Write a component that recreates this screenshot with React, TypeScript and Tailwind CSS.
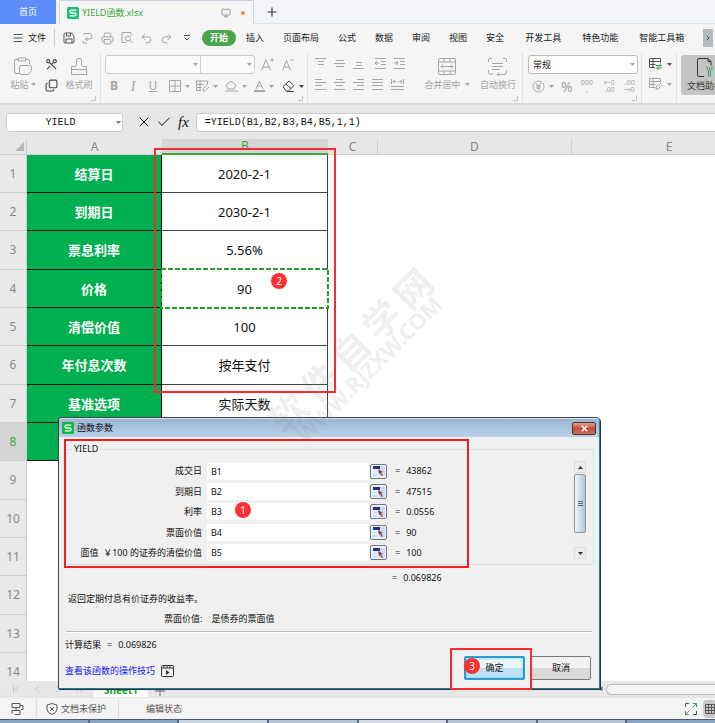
import type { ReactNode } from "react";
import { ChevronLeft, ChevronRight, ChevronFirst, ChevronLast, Menu, Monitor, Plus, Printer, Redo2, Scissors, Undo2, Copy, Check, X } from "lucide-react";

type IconProps = { w: number; h: number; children: ReactNode; className?: string };

function Icon({ w, h, children, className = "" }: IconProps) {
  return (
    <svg width={w} height={h} viewBox={`0 0 ${w} ${h}`} fill="none" stroke="currentColor" strokeWidth="1" className={`shrink-0 ${className}`} aria-hidden="true">
      {children}
    </svg>
  );
}

function Caret({ className = "" }: { className?: string }) {
  return (
    <svg width="5" height="3" viewBox="0 0 5 3" className={`shrink-0 ${className}`} aria-hidden="true">
      <path d="M0 0h5L2.5 3z" fill="currentColor" />
    </svg>
  );
}

function Corner() {
  return (
    <Icon w={5} h={5} className="absolute right-1 bottom-[2px] text-[#c4c4c4]">
      <path d="M0 4.5h4.5V0" />
    </Icon>
  );
}

function Logo({ className }: { className: string }) {
  return (
    <svg viewBox="0 0 12 12" className={className} aria-hidden="true">
      <rect width="12" height="12" rx="1.5" fill="currentColor" />
      <path d="M9.3 3.2H4.4Q2.9 3.2 2.9 4.5T4.4 6h3.2Q9.1 6 9.1 7.4T7.6 8.8H2.7" fill="none" stroke="#fff" strokeWidth="1.3" />
    </svg>
  );
}

const lines: Record<string, string> = {
  top: "M0 .5h11M3 3.5h6M3 6.5h6",
  middle: "M2 2.5h8M0 5.5h11M2 8.5h8",
  bottom: "M3 4.5h6M3 7.5h6M0 10.5h11",
  left: "M0 .5h7M0 3.5h11M0 6.5h7M0 10.5h11",
  center: "M2 .5h7M0 3.5h11M2 6.5h7M0 10.5h11",
  right: "M4 .5h7M0 3.5h11M4 6.5h7M0 10.5h11",
  justify: "M0 .5h11M0 3.5h11M0 6.5h11M0 10.5h11",
  outdent: "M0 .5h11M6 3.5h5M6 6.5h5M0 10.5h11M0 5h4M2 3 0 5l2 2",
  indent: "M0 .5h11M6 3.5h5M6 6.5h5M0 10.5h11M0 5h4M2 3l2 2-2 2",
  spread: "M.5 0v5M12.5 0v5M2 2.5h3.500M3.500 1 2 2.500 3.500 4M7.500 2.500H11M9.500 1 11 2.500 9.500 4M0 7.5h13M0 10.5h13",
};

function Lines({ kind, label }: { kind: string; label: string }) {
  return (
    <button aria-label={label} className="flex w-[19px] justify-center">
      <Icon w={13} h={11}><path d={lines[kind]} /></Icon>
    </button>
  );
}

const menus = ["插入", "页面布局", "公式", "数据", "审阅", "视图", "安全"];

function Tabs() {
  return (
    <div className="flex h-6 shrink-0 bg-[#f2f4f9] text-[9px]">
      <button className="w-14 bg-[#5c8dfa] text-white">首页</button>
      <div className="ml-[3px] flex w-[195px] items-center rounded-t-[2px] border-x border-t border-[#ccd3e0] bg-[#f5f5f5] pr-2 pl-[7px]">
        <Logo className="size-3 text-[#1fbf7a]" />
        <span className="ml-[3px] text-[#3aa53a]">YIELD函数.xlsx</span>
        <Monitor className="ml-auto size-[10px] text-[#909090]" />
        <span className="ml-[10px] size-1 rounded-full bg-[#ee9343]" />
      </div>
      <button aria-label="新建" className="flex w-9 items-center justify-center border-b border-[#dfe4ec]">
        <Plus className="size-[14px] text-[#333]" />
      </button>
      <div className="grow border-b border-[#dfe4ec]" />
    </div>
  );
}

function MenuBar() {
  return (
    <nav className="flex h-[28px] shrink-0 items-center bg-[#f5f5f5] text-[9px] whitespace-nowrap text-[#222]">
      <button className="ml-[12px] flex items-center gap-1"><Menu className="size-3 text-[#555]" />文件</button>
      <span className="ml-2 h-[18px] w-px bg-[#ccc]" />
      <div className="ml-2 flex items-center gap-[7px] text-[#a5a5a5]">
        <button aria-label="保存" className="text-[#555]"><Icon w={12} h={12}><path d="M1 2.500V10q0 1 1 1h8q1 0 1-1V4L8.500 1H2Q1 1 1 2.500ZM3.500 1v3h4V1M3 11V7h6v4" /></Icon></button>
        <button aria-label="输出"><Icon w={12} h={12}><path d="M2 3V1.500h5.500q2.500.5 2.500 3T7.500 7H3.500M5.500 5l-2 2 2 2M1 9v2h4" /></Icon></button>
        <button aria-label="打印"><Printer className="size-[13px] stroke-[1.800px]" /></button>
        <button aria-label="打印预览"><Icon w={12} h={12}><path d="M5 10.500H1V.5h9v3" /><circle cx="7" cy="6.500" r="2.500" /><path d="m9 8.500 2.500 2.500" /></Icon></button>
        <button aria-label="撤消"><Undo2 className="size-[13px] stroke-[1.800px]" /></button>
        <button aria-label="恢复"><Redo2 className="size-[13px] stroke-[1.800px]" /></button>
        <button aria-label="更多" className="ml-1 text-[#444]"><Icon w={6} h={6}><path d="M0 .5h6M.5 2.500 3 5l2.500-2.500" /></Icon></button>
      </div>
      <button className="ml-3 h-4 w-[34px] rounded-full bg-[#4ba64b] font-bold text-white">开始</button>
      <div className="ml-[10px] flex gap-[19px]">
        {menus.map((m) => <button key={m}>{m}</button>)}
      </div>
      <div className="ml-[21px] flex gap-[21px]">
        <button>开发工具</button>
        <button>特色功能</button>
        <button>智能工具箱</button>
      </div>
      <button aria-label="向右" className="ml-auto flex h-[18px] w-[10px] shrink-0 items-center justify-center bg-[#b5b9c2]"><ChevronRight className="size-2" /></button>
      <span className="w-[2px]" />
    </nav>
  );
}

function Ribbon() {
  return (
    <div className="flex h-[53px] shrink-0 overflow-hidden border-b-2 border-[#dadada] bg-[#f5f5f5] text-[9px] whitespace-nowrap text-[#a5a5a5]">
      <section className="relative flex w-[101px] shrink-0 border-r border-[#e2e2e2] pl-[10px]">
        <button className="flex w-[26px] flex-col items-center pt-[5px]">
          <Icon w={18} h={19}><path d="M4 2.500H2Q.5 2.500.5 4v11q0 1.500 1.500 1.500h3M12 2.500h2q1.500 0 1.500 1.500v3M4.500 1h7v3h-7zM7 8.500h8.500q2 0 2 2v3l-3 4H7q-1.500 0-1.500-1.500v-6Q5.500 8.500 7 8.500Z" /></Icon>
          <span className="mt-[2px] flex items-center gap-[2px]">粘贴<Caret /></span>
        </button>
        <div className="ml-2 flex w-[14px] flex-col items-center gap-2 pt-[6px] text-[#444]">
          <button aria-label="剪切"><Scissors className="size-[13px] rotate-90" /></button>
          <button aria-label="复制"><Copy className="size-[13px] -scale-y-100" /></button>
        </div>
        <button className="ml-[5px] flex w-8 flex-col items-center pt-[5px]">
          <Icon w={18} h={19}><path d="M1.500 17.500v-8h4q1-1 1-3V3q0-1.500 1.500-1.500h2q1.500 0 1.500 1.500v3.500q0 2 1 3h4v8zM1.500 12.500h15" /></Icon>
          <span className="mt-[2px]">格式刷</span>
        </button>
        <Corner />
      </section>

      <section className="relative w-[207px] shrink-0 border-r border-[#e2e2e2] pt-[3px] pl-[4px]">
        <div className="flex h-[19px] items-center">
          <div className="flex h-[19px] w-[150px] rounded-[3px] border border-[#ccc] bg-[#fbfbfb]">
            <button aria-label="字体" className="flex w-[95px] items-center justify-end border-r border-[#ccc] pr-[2px]"><Caret /></button>
            <button aria-label="字号" className="flex grow items-center justify-end pr-[2px]"><Caret /></button>
          </div>
          <button aria-label="增大字号" className="ml-[6px]"><Icon w={13} h={13}><path d="M.5 12.500 5 1.500l4.500 11M2 9h6M11 0v4M9 2h4" /></Icon></button>
          <button aria-label="减小字号" className="ml-2"><Icon w={12} h={13}><path d="m.5 12.500 4-10 4 10M2 9h5M8 2h4" /></Icon></button>
        </div>
        <div className="mt-[5px] flex h-[14px] items-center text-[12px]">
          <button className="w-[18px] font-bold">B</button>
          <button className="w-5 font-['Liberation_Serif',serif] text-[14px] italic">I</button>
          <button className="w-5 underline">U</button>
          <button aria-label="边框" className="ml-[6px] flex items-center gap-1"><Icon w={12} h={12}><path d="M.5.5h11v11H.5zM6 0v12M0 6h12" /></Icon><Caret /></button>
          <button aria-label="填充" className="ml-[6px] flex items-center gap-1"><Icon w={13} h={12}><path d="M5 10.500H.5V1h11v3M.5 4.500h7M.5 7.500h5M4 1v9M12 4 7 9v2h2l4-4" /></Icon><Caret /></button>
          <button aria-label="填充颜色" className="ml-[7px] flex items-center gap-1"><Icon w={13} h={12}><path d="M6 1 1 5l2 4h6l2-4zM0 11h13" /></Icon><Caret /></button>
          <button aria-label="字体颜色" className="ml-[7px] flex items-center gap-1"><Icon w={11} h={12}><path d="m2 9 3.500-8L9 9M3 6h5" /><path d="M0 11h11" strokeWidth="2" /></Icon><Caret /></button>
          <button aria-label="清除" className="ml-[8px] flex items-center gap-1 text-[#444]"><Icon w={13} h={12}><path d="m1 6.500 6-5.500 5 4.500-5.500 5.500H4zM4 4l5 4.500M5 11.500h7" /></Icon><Caret /></button>
        </div>
        <Corner />
      </section>

      <section className="relative w-[215px] shrink-0 border-r border-[#e2e2e2]">
        <div className="flex pl-1">
          <div className="flex flex-col gap-[10px] pt-[6px]">
            <div className="flex"><Lines kind="top" label="顶端对齐" /><Lines kind="middle" label="垂直居中" /><Lines kind="bottom" label="底端对齐" /><span className="w-[3px]" /><Lines kind="outdent" label="减少缩进" /><Lines kind="indent" label="增加缩进" /></div>
            <div className="flex"><Lines kind="left" label="左对齐" /><Lines kind="center" label="水平居中" /><Lines kind="right" label="右对齐" /><Lines kind="justify" label="两端对齐" /><Lines kind="spread" label="分散对齐" /></div>
          </div>
          <button className="ml-[14px] flex w-[46px] flex-col items-center pt-[6px]">
            <Icon w={18} h={18}><rect x=".5" y=".5" width="17" height="16" rx="1.500" /><path d="M0 4h18M0 13h18M6 0v4M12 0v4M6 13v4M12 13v4M3 8.500h12M5 6.500l-2 2 2 2M13 6.500l2 2-2 2" /></Icon>
            <span className="mt-[2px] flex items-center gap-1">合并居中<Caret /></span>
          </button>
          <button className="ml-[8px] flex w-10 flex-col items-center pt-[6px]">
            <Icon w={20} h={18}><path d="M4 .5H2Q.5.5.5 2v2M15 .5h2q1.500 0 1.500 1.500v2M.5 12v2.500q0 1.500 1.500 1.500h3M4 5.500h11M4 8.500h11M4 11.500h8M9 16.500h8q1.500 0 1.500-4M11 14.500l-2 2 2 1.500" /></Icon>
            <span className="mt-[2px]">自动换行</span>
          </button>
        </div>
        <Corner />
      </section>

      <section className="relative w-[119px] shrink-0 border-r border-[#e2e2e2] pt-[3px] pl-[5px]">
        <div className="relative w-[110px]">
          <select aria-label="数字格式" defaultValue="常规" className="h-[19px] w-full appearance-none rounded-[3px] border border-[#bbb] bg-white pl-1 text-[9px] text-[#222]">
            <option>常规</option>
          </select>
          <Caret className="absolute top-2 right-[3px]" />
        </div>
        <div className="mt-[4px] flex h-4 items-center text-[7px]">
          <button aria-label="货币" className="ml-[4px] flex items-center gap-1"><Icon w={13} h={13}><circle cx="6.500" cy="6.500" r="5.500" /><path d="m4 3 2.500 3L9 3M6.500 6v4M4 6h5M4 8h5" /></Icon><Caret /></button>
          <button className="ml-[7px] text-[14px]">%</button>
          <button className="ml-[6px] w-4 leading-[7px]">000<br />,</button>
          <button className="ml-[8px] w-3 text-right leading-[7px]">←0<br />.00</button>
          <button className="ml-[8px] w-3 text-right leading-[7px]">.00<br />→0</button>
        </div>
        <Corner />
      </section>

      <section className="flex w-[35px] shrink-0 flex-col gap-2 border-r border-[#e2e2e2] pt-[6px] pl-[7px]">
        <button aria-label="条件格式" className="flex items-center gap-[5px] text-[#555]"><Icon w={13} h={12}><path d="M6 9.500H.5V.5h11v4M.5 3.500h11M.5 6.500h6M4 .5v9" /><path d="M7 7.500h6M7 10h6M11.500 5.500l-3 6.500" stroke="#3f9d63" /></Icon><Caret /></button>
        <button aria-label="表格样式" className="flex items-center gap-[5px]"><Icon w={13} h={12}><path d="M6 9.500H.5V.5h11v4M.5 3.500h11M.5 6.500h6M4 .5v9M12 5 7 9v2h2l4-4" /></Icon><Caret /></button>
      </section>

      <button className="mt-[3px] ml-[4px] flex h-10 w-12 shrink-0 flex-col items-center rounded-[3px] bg-[#c4c4c4] pt-[3px] text-[#333]">
        <Icon w={20} h={20}><path d="M9 18.500H4Q2.500 18.500 2.500 17V2Q2.500.5 4 .5h9l3 3v4M13 .5v3h3" /><path d="M12 8v2.500q0 1.500 1.500 2v5q0 1 1 1t1-1v-5q1.500-.5 1.500-2V8M14.500 9v3" stroke="#2f9b5c" /></Icon>
        <span className="mt-px">文档助手</span>
      </button>
    </div>
  );
}

function FormulaBar() {
  return (
    <div className="flex h-[34px] shrink-0 items-center bg-[#e7e7e7] pl-[6px] font-['Liberation_Mono','Noto_Sans_CJK_SC',monospace] text-[10px] text-[#111]">
      <div className="relative">
        <input aria-label="名称框" defaultValue="YIELD" className="h-[19px] w-[117px] rounded-[3px] border border-[#ccc] bg-white pr-2 text-center" />
        <Caret className="absolute top-2 right-[2px] text-[#777]" />
      </div>
      <button aria-label="取消输入" className="ml-[13px]"><X className="size-4 stroke-[1.500px]" /></button>
      <button aria-label="输入" className="ml-1"><Check className="size-4 stroke-[1.500px]" /></button>
      <button aria-label="插入函数" className="ml-[6px] font-['Liberation_Serif',serif] text-[15px] italic">fx</button>
      <input aria-label="编辑栏" defaultValue="=YIELD(B1,B2,B3,B4,B5,1,1)" className="ml-[7px] h-[19px] min-w-0 grow rounded-l-[3px] border border-r-0 border-[#ccc] bg-white pl-2" />
    </div>
  );
}

const rows = [
  ["结算日", "2020-2-1"],
  ["到期日", "2030-2-1"],
  ["票息利率", "5.56%"],
  ["价格", "90"],
  ["清偿价值", "100"],
  ["年付息次数", "按年支付"],
  ["基准选项", "实际天数"],
  ["", ""],
  ["", ""], ["", ""], ["", ""], ["", ""], ["", ""], ["", ""],
];

function Sheet() {
  return (
    <main className="relative min-h-0 grow overflow-hidden bg-white">
      <table className="w-full min-w-[766px] table-fixed border-separate border-spacing-0 text-center text-[13px] leading-5 text-[#111]">
        <colgroup>
          <col className="w-[27px]" /><col className="w-[135px]" /><col className="w-[166px]" /><col className="w-[50px]" /><col className="w-[194px]" /><col />
        </colgroup>
        <thead>
          <tr className="h-4 bg-[#e7e7e7] text-[12px] leading-[14px] text-[#888]">
            <th className="border-r border-b border-[#d0d0d0] p-0">
              <svg width="9" height="9" viewBox="0 0 9 9" className="mr-[2px] ml-auto" aria-hidden="true"><path d="M9 0v9H0z" fill="#b5b5b5" /></svg>
            </th>
            <th className="border-b border-[#d0d0d0] p-0 font-normal">A</th>
            <th className="border-b-2 border-[#3fa53f] bg-[#d5d5d5] p-0 font-normal text-[#3fa53f]">B</th>
            <th className="border-r border-b border-[#d0d0d0] p-0 font-normal">C</th>
            <th className="border-r border-b border-[#d0d0d0] p-0 font-normal">D</th>
            <th className="border-b border-[#d0d0d0] p-0 font-normal">E</th>
          </tr>
        </thead>
        <tbody>
          {rows.map(([name, value], i) => (
            <tr key={i} className={i % 3 === 2 ? "h-[39px]" : "h-[38px]"}>
              <th className={`border-r border-b border-[#cfcfcf] p-0 text-[12px] font-normal ${i === 7 ? "bg-[#d5d5d5] text-[#3fa53f]" : "bg-[#e9e9e9] text-[#888]"}`}>{i + 1}</th>
              <td className={`p-0 font-bold text-white ${i < 8 ? "border-r border-b border-[#111] bg-[#00b050]" : ""}`}>{name}</td>
              <td className={`relative p-0 ${i === 3 ? "border-r border-b border-white" : i === 2 ? "border-r border-b border-r-[#444] border-b-white" : i < 8 ? "border-r border-b border-[#444]" : ""}`}>
                {value}
                {i === 3 && (
                  <svg className="absolute -inset-px size-[calc(100%+2px)] overflow-visible" aria-hidden="true">
                    <rect width="100%" height="100%" fill="none" stroke="#2c9a2c" strokeWidth="2" strokeDasharray="5 2" />
                  </svg>
                )}
              </td>
              <td /><td /><td />
            </tr>
          ))}
        </tbody>
      </table>
    </main>
  );
}

function BottomBars() {
  return (
    <footer className="shrink-0 text-[9px] text-[#555]">
      <div className="flex h-[17px] items-start bg-[#e7e7e7] text-[#c3c3c3]">
        <div className="flex h-4 w-[94px] items-center gap-[9px] pl-[10px]">
          <ChevronFirst className="size-3" /><ChevronLeft className="size-3" /><ChevronRight className="size-3" /><ChevronLast className="size-3" />
        </div>
        <button className="h-4 w-[54px] bg-white pt-[2px] text-[10px] leading-[14px] font-bold text-[#1c9c1c]">Sheet1</button>
        <Plus className="mt-[2px] ml-1 size-4 text-[#888]" />
        <span className="ml-auto text-[#777]">◂</span>
        <div className="mt-[3px] ml-[3px] h-[11px] w-[109px] rounded-l-full border border-r-0 border-[#bbb] bg-[#f5f5f5]" />
      </div>
      <div className="flex h-[21px] items-center bg-[#f4f4f4]">
        <Icon w={13} h={12} className="ml-[11px]"><path d="M1 .5h8v4H1zM5 4.500V7M1 7.500h8v4H4M9 2.500h3v4h-2M1 7v4" /></Icon>
        <span className="ml-3 h-[19px] w-px bg-[#ddd]" />
        <Icon w={12} h={12} className="ml-[9px]"><path d="M6 .5 11 2v4q0 3.500-5 5.500Q1 9.500 1 6V2zM4 4l4 4M8 4 4 8" /></Icon>
        <span className="ml-[3px]">文档未保护</span>
        <span className="ml-3 h-[19px] w-px bg-[#ddd]" />
        <span className="ml-[27px]">编辑状态</span>
        <button aria-label="全屏" className="ml-auto"><Icon w={12} h={12}><path d="M.5 4V.5H4M11.500 8v3.500H8" /><path d="M8 .5h3.500V4M11.500.5 7.500 4.500M.5 8v3.500H4M.5 11.500l4-4" stroke="#3f9d63" /></Icon></button>
        <button aria-label="普通视图" className="ml-[6px] flex h-[18px] w-3 items-center justify-end rounded-l bg-[#c9c9c9]"><Icon w={10} h={10}><path d="M.5.5h9v9h-9zM0 3.500h10M0 6.500h10M3.500 0v10M6.500 0v10" /></Icon></button>
      </div>
      <div className="grid h-[4px] grid-cols-8 gap-[2px] border-t border-[#4d5a70] bg-[#5b6880]">
        <span className="bg-[#8ba3c4]" /><span className="bg-[#8ba3c4]" /><span className="bg-[#c9d3e2]" /><span className="bg-[#b7c3d6]" /><span className="bg-[#d2dae6]" /><span className="bg-[#b7c3d6]" /><span className="bg-[#b7c3d6]" /><span className="bg-[#8ba3c4]" />
      </div>
    </footer>
  );
}

const args = [
  ["成交日", "B1", "43862"],
  ["到期日", "B2", "47515"],
  ["利率", "B3", "0.0556"],
  ["票面价值", "B4", "90"],
  ["面值  ￥100 的证券的清偿价值", "B5", "100"],
];

function Dialog() {
  return (
    <section role="dialog" aria-label="函数参数" className="absolute top-[417px] left-[58px] flex h-[272px] w-[542px] flex-col rounded-t-[4px] border border-[#444] border-r-[#20859c] border-b-[#1b7f93] bg-[#f0f0f0] text-[9px] text-[#111] shadow-[1px_1px_0_#333]">
      <header className="flex h-[19px] shrink-0 items-center rounded-t-[3px] border-t border-[#d5e4f3] bg-linear-to-b from-[#9ab6d5] to-[#bad0e8] pl-[3px]">
        <Logo className="size-3 text-[#0dbb3f]" />
        <h2 className="ml-[3px]">函数参数</h2>
        <button aria-label="关闭" className="mr-[3px] ml-auto flex h-[13px] w-6 items-center justify-center rounded-[2px] border border-[#612f29] bg-linear-to-b from-[#e0a294] via-[#bf4d36] to-[#c97560] text-white"><X className="size-[9px] stroke-[4px]" /></button>
      </header>

      <fieldset className="mx-[5px] mt-[5px] flex h-[123px] rounded-[3px] border border-[#d6e0e9] pr-[5px]">
        <legend className="ml-2 px-px text-[9px] leading-[14px]">YIELD</legend>
        <div className="grid h-[107px] grow grid-rows-5 pt-[5px]">
          {args.map(([label, ref, value]) => (
            <div key={ref} className="flex items-center">
              <label htmlFor={ref} className="w-[137px] text-right whitespace-pre">{label}</label>
              <input id={ref} defaultValue={ref} className="ml-[5px] h-[17px] w-[162px] bg-white pl-1" />
              <button aria-label={`选择${label}`} className="ml-px flex h-[15px] w-[17px] items-center justify-center rounded-[2px] border border-[#777] bg-[#e8f0fc]">
                <Icon w={12} h={10}><path d="M0 0h12v10H0z" fill="#c9dbf8" stroke="none" /><path d="M0 4h5M0 7h5M5 3v7" stroke="#fff" /><path d="M0 0h7v3H0z" fill="#253385" stroke="none" /><path d="m5 3 5 3-2 .5 2 3-1 .5-2-3-1 1z" fill="#8b3a32" stroke="none" /></Icon>
              </button>
              <span className="ml-2">=</span>
              <output htmlFor={ref} className="ml-[6px]">{value}</output>
            </div>
          ))}
        </div>
        <div className="mr-[2px] mt-[5px] flex h-[98px] w-3 flex-col bg-[#eee] text-[#333]">
          <button aria-label="向上滚动" className="flex h-3 items-center justify-center border border-[#ddd]"><Caret className="rotate-180" /></button>
          <div className="mt-px flex h-[59px] flex-col items-center justify-center gap-px rounded-[2px] border border-[#8b979f] bg-linear-to-r from-[#f2f6f9] to-[#b3c5d1]">
            <span className="h-px w-[5px] bg-[#567]" /><span className="h-px w-[5px] bg-[#567]" /><span className="h-px w-[5px] bg-[#567]" />
          </div>
          <button aria-label="向下滚动" className="mt-auto flex h-3 items-center justify-center border border-[#ddd]"><Caret /></button>
        </div>
      </fieldset>

      <div className="mt-[6px] pl-[333px] leading-[14px]">=<output className="ml-[6px]">0.069826</output></div>
      <p className="mt-[7px] pl-[9px] leading-[14px]">返回定期付息有价证券的收益率。</p>
      <p className="mt-[6px] flex gap-[9px] pl-[105px] leading-[14px]"><span>票面价值:</span><span>是债券的票面值</span></p>
      <hr className="mx-[7px] mt-[5px] border-t border-b border-t-[#b9b9b9] border-b-white" />
      <div className="flex grow justify-between pr-2 pl-[6px]">
        <div className="pt-[5px] leading-[14px]">
          <p className="flex gap-[6px]">计算结果<span>=</span><output>0.069826</output></p>
          <a href="#help" className="mt-[12px] flex items-center gap-[6px] text-[#1414f5]">查看该函数的操作技巧
            <Icon w={13} h={12} className="text-[#333]"><rect x=".5" y=".5" width="12" height="11" rx="1" /><path d="M0 3h12M3 0v3M6 0v3M9 0v3" /><path d="m5 5 3.500 2.500L5 10z" fill="currentColor" stroke="none" /></Icon>
          </a>
        </div>
        <div className="flex items-start gap-[6px] pt-[23px]">
          <button className="h-6 w-[61px] rounded-[2px] border-2 border-[#2e9bd0] bg-linear-to-b from-[#e9f6fd] from-50% to-[#bfe3f6] to-50% shadow-[inset_0_0_2px_#29c8f0]">确定</button>
          <button className="h-6 w-[60px] rounded-[2px] border border-[#777] bg-linear-to-b from-[#f2f2f2] from-50% to-[#d8d8d8] to-50%">取消</button>
        </div>
      </div>
    </section>
  );
}

function Badge({ n, className }: { n: number; className: string }) {
  return <span className={`absolute flex size-4 items-center justify-center rounded-full bg-[#ff3030] text-[10px] text-white ${className}`}>{n}</span>;
}

function Annotations() {
  return (
    <div className="pointer-events-none absolute inset-0 overflow-hidden">
      <div className="absolute top-[148px] left-[154px] h-[245px] w-[182px] border-2 border-[#f52d2d]" />
      <div className="absolute top-[439px] left-[64px] h-[129px] w-[405px] border-2 border-[#f51d1d]" />
      <div className="absolute top-[648px] left-[450px] h-[42px] w-[82px] border-2 border-[#f52d2d]" />
      <Badge n={2} className="top-[273px] left-[271px]" />
      <Badge n={1} className="top-[502px] left-[235px]" />
      <Badge n={3} className="top-[658px] left-[464px]" />
      <div className="absolute top-[333px] left-[248px] flex w-[220px] -rotate-45 flex-col items-center font-bold text-[#808080]/15">
        <div className="flex gap-[7px] text-[37px] leading-[30px]"><span>软</span><span>件</span><span>自</span><span>学</span><span>网</span></div>
        <div className="text-[22px] leading-5">WWW.RJZXW.COM</div>
      </div>
    </div>
  );
}

export default function App() {
  return (
    <div className="relative flex h-screen flex-col overflow-hidden bg-[#e7e7e7] font-['Noto_Sans','Noto_Sans_CJK_SC',sans-serif]">
      <Tabs />
      <MenuBar />
      <Ribbon />
      <FormulaBar />
      <Sheet />
      <BottomBars />
      <Dialog />
      <Annotations />
    </div>
  );
}
